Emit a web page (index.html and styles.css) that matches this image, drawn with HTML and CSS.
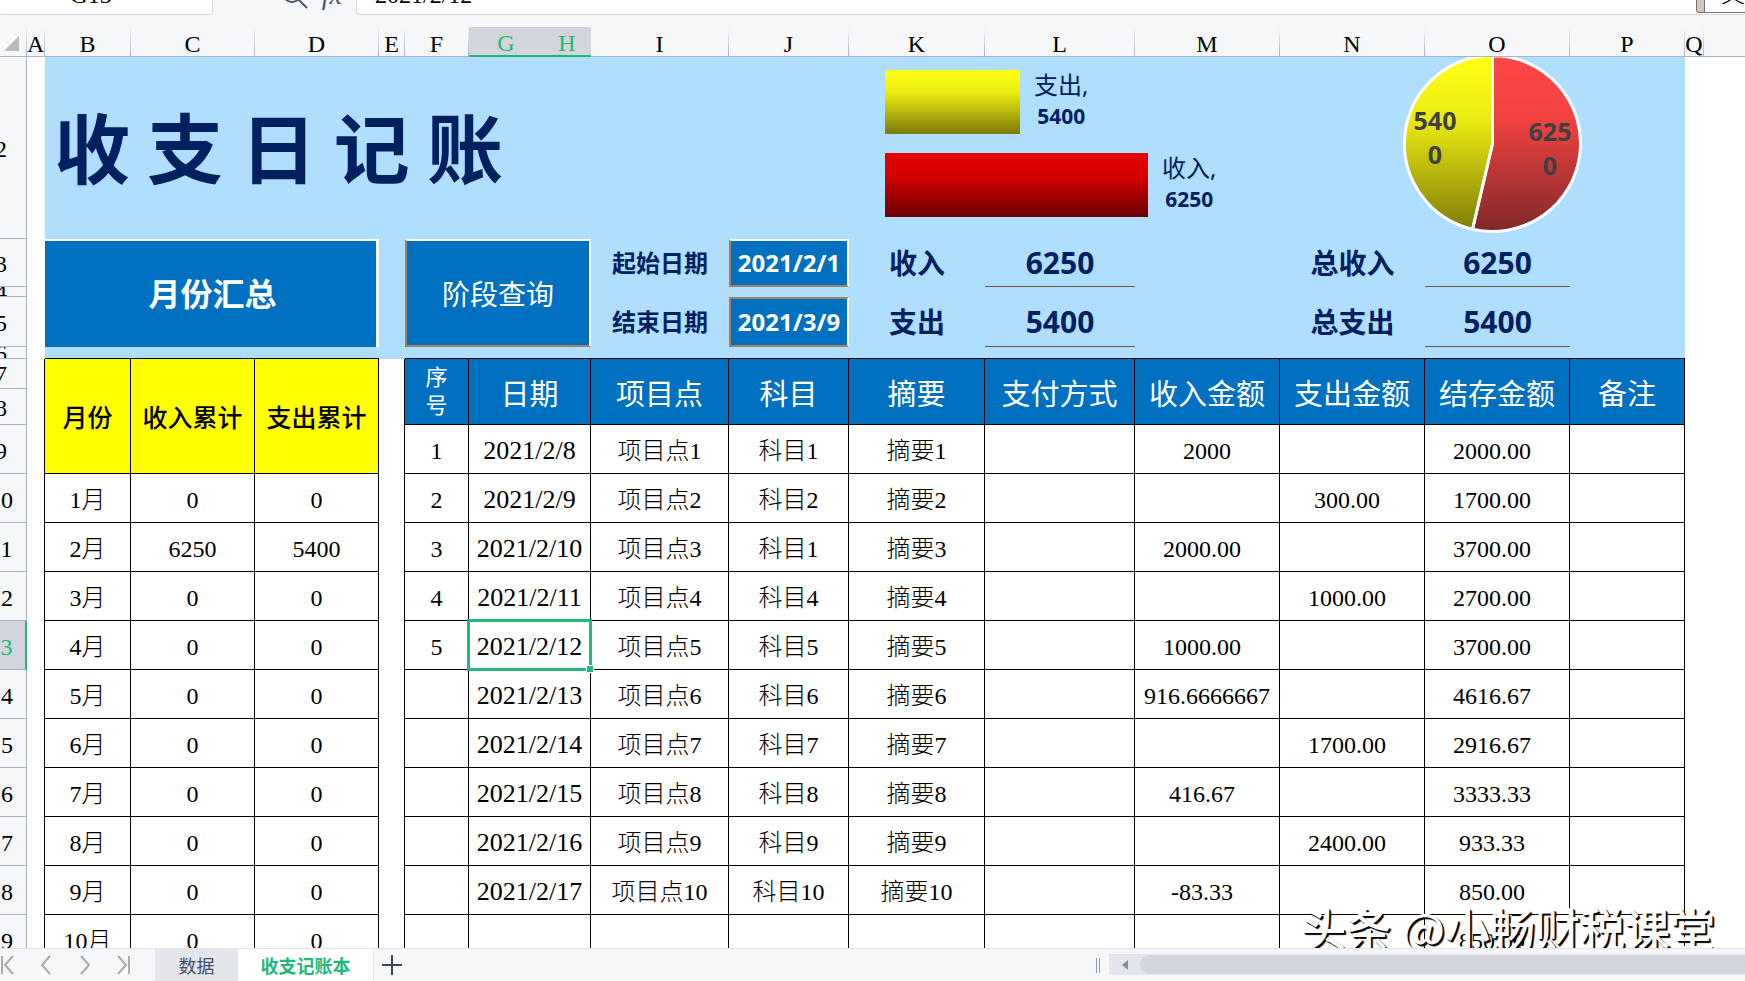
FILE: index.html
```
<!DOCTYPE html>
<html lang="zh-CN">
<head>
    <meta charset="UTF-8">
    <meta name="viewport" content="width=device-width, initial-scale=1.0">
    <title>收支日记账</title>
    <link rel="stylesheet" href="styles.css">
</head>
<body>
    <div class="formula-bar">
        <input class="name-box" type="text" value="G13" aria-label="名称框">
        <div class="formula-icons">
            <svg width="26" height="26" viewBox="0 0 26 26" fill="none" stroke="#4a5568" stroke-width="2">
                <circle cx="10" cy="10" r="9"/>
                <path d="M16 16 L25 25"/>
            </svg>
            <span class="fx">fx</span>
        </div>
        <input class="formula-input" type="text" value="2021/2/12" aria-label="编辑栏">
    </div>
    <div class="float-bar"><span class="grip"></span><span class="lang">文</span></div>

    <main class="sheet">
        <table class="grid">
            <colgroup>
                <col class="w-head"><col class="w-a"><col class="w-b"><col class="w-c"><col class="w-c"><col class="w-e">
                <col class="w-f"><col class="w-g"><col class="w-h"><col class="w-i"><col class="w-j"><col class="w-k">
                <col class="w-l"><col class="w-m"><col class="w-m"><col class="w-m"><col class="w-p"><col class="w-q"><col>
            </colgroup>
            <thead>
                <tr class="letters">
                    <th class="corner"><svg width="16" height="16" viewBox="0 0 16 16"><path d="M15 0 V15 H0 Z" fill="#b9babc"/></svg></th>
                    <th>A</th><th>B</th><th>C</th><th>D</th><th>E</th><th>F</th>
                    <th class="picked">G</th><th class="picked">H</th>
                    <th>I</th><th>J</th><th>K</th><th>L</th><th>M</th><th>N</th><th>O</th><th>P</th><th>Q</th><th class="rest"></th>
                </tr>
            </thead>
            <tbody id="rows">
                <tr class="r2">
                    <th>2</th>
                    <td></td>
                    <td class="sky title" colspan="9"><h1>收 支 日 记 账</h1></td>
                    <td class="sky top" colspan="3">
                        <div class="bars">
                            <div class="bar-row"><div class="bar out"></div><p>支出,<br><b>5400</b></p></div>
                            <div class="bar-row"><div class="bar in"></div><p>收入,<br><b>6250</b></p></div>
                        </div>
                    </td>
                    <td class="sky top" colspan="3">
                        <svg class="pie" width="182" height="178" viewBox="0 0 182 178">
                            <defs>
                                <linearGradient id="redFill" gradientUnits="userSpaceOnUse" x1="0" y1="0" x2="0" y2="176">
                                    <stop offset="0" stop-color="#ff4646"/>
                                    <stop offset="0.35" stop-color="#f24242"/>
                                    <stop offset="1" stop-color="#7f2828"/>
                                </linearGradient>
                                <linearGradient id="yellowFill" gradientUnits="userSpaceOnUse" x1="0" y1="0" x2="0" y2="176">
                                    <stop offset="0" stop-color="#ffff14"/>
                                    <stop offset="0.35" stop-color="#ecec12"/>
                                    <stop offset="1" stop-color="#7c7a06"/>
                                </linearGradient>
                            </defs>
                            <g stroke="#fff" stroke-width="3" stroke-linejoin="round">
                                <path d="M91.5 86.5 V-1.5 A88 88 0 1 1 71.5 172.2 Z" fill="url(#redFill)"/>
                                <path d="M91.5 86.5 L71.5 172.2 A88 88 0 0 1 91.5 -1.5 Z" fill="url(#yellowFill)"/>
                            </g>
                            <g class="pie-text">
                                <text x="34" y="73">540</text>
                                <text x="34" y="107">0</text>
                                <text x="149" y="84">625</text>
                                <text x="149" y="118">0</text>
                            </g>
                        </svg>
                    </td>
                    <td colspan="2"></td>
                </tr>
                <tr class="r3">
                    <th>3</th>
                    <td></td>
                    <td class="panel month" colspan="3" rowspan="3">月份汇总</td>
                    <td class="sky"></td>
                    <td class="panel query" colspan="3" rowspan="3">阶段查询</td>
                    <td class="sky label small">起始日期</td>
                    <td class="panel date">2021/2/1</td>
                    <td class="sky label">收入</td>
                    <td class="sky label line">6250</td>
                    <td class="sky"></td>
                    <td class="sky label">总收入</td>
                    <td class="sky label line">6250</td>
                    <td class="sky"></td>
                    <td colspan="2"></td>
                </tr>
                <tr class="r4">
                    <th><span>4</span></th>
                    <td></td>
                    <td class="sky"></td>
                    <td class="sky" colspan="8"></td>
                    <td colspan="2"></td>
                </tr>
                <tr class="r5">
                    <th>5</th>
                    <td></td>
                    <td class="sky"></td>
                    <td class="sky label small">结束日期</td>
                    <td class="panel date end">2021/3/9</td>
                    <td class="sky label">支出</td>
                    <td class="sky label line">5400</td>
                    <td class="sky"></td>
                    <td class="sky label">总支出</td>
                    <td class="sky label line">5400</td>
                    <td class="sky"></td>
                    <td colspan="2"></td>
                </tr>
                <tr class="r6">
                    <th><span>6</span></th>
                    <td></td>
                    <td class="sky under" colspan="3"></td>
                    <td class="sky"></td>
                    <td class="sky under" colspan="11"></td>
                    <td colspan="2"></td>
                </tr>
                <tr class="r7">
                    <th>7</th>
                    <td class="edge" rowspan="3"></td>
                    <td class="box total" rowspan="3">月份</td>
                    <td class="box total" rowspan="3">收入累计</td>
                    <td class="box total" rowspan="3">支出累计</td>
                    <td class="edge" rowspan="2"></td>
                    <td class="box head no" rowspan="2">序<br>号</td>
                    <td class="box head" rowspan="2" colspan="2">日期</td>
                    <td class="box head" rowspan="2">项目点</td>
                    <td class="box head" rowspan="2">科目</td>
                    <td class="box head" rowspan="2">摘要</td>
                    <td class="box head" rowspan="2">支付方式</td>
                    <td class="box head" rowspan="2">收入金额</td>
                    <td class="box head" rowspan="2">支出金额</td>
                    <td class="box head" rowspan="2">结存金额</td>
                    <td class="box head" rowspan="2">备注</td>
                    <td colspan="2" rowspan="2"></td>
                </tr>
                <tr class="r8"><th>8</th></tr>
            </tbody>
        </table>
        <div class="watermark">头条 @小畅财税课堂</div>
    </main>

    <footer class="tab-bar">
        <div class="tab-nav">
            <button aria-label="第一张"><svg width="14" height="20" viewBox="0 0 14 20"><path d="M2 1 V19 M13 1 L5 10 L13 19"/></svg></button>
            <button aria-label="上一张"><svg width="14" height="20" viewBox="0 0 14 20"><path d="M11 1 L3 10 L11 19"/></svg></button>
            <button aria-label="下一张"><svg width="14" height="20" viewBox="0 0 14 20"><path d="M3 1 L11 10 L3 19"/></svg></button>
            <button aria-label="最后一张"><svg width="14" height="20" viewBox="0 0 14 20"><path d="M12 1 V19 M1 1 L9 10 L1 19"/></svg></button>
        </div>
        <button class="tab">数据</button>
        <button class="tab active">收支记账本</button>
        <button class="add" aria-label="新建工作表"><svg width="20" height="20" viewBox="0 0 20 20"><path d="M10 0 V20 M0 10 H20"/></svg></button>
        <div class="splitter"></div>
        <div class="scrollbar">
            <button aria-label="向左滚动"><svg width="6" height="10" viewBox="0 0 6 10"><path d="M6 0 V10 L0 5 Z" fill="#7f8fa9"/></svg></button>
            <div class="thumb"></div>
        </div>
    </footer>

    <script>
        // [序号, 日期, 项目点, 科目, 摘要, 收入, 支出, 结存]
        const entries = [
            ['1', '2021/2/8', '项目点1', '科目1', '摘要1', '2000', '', '2000.00'],
            ['2', '2021/2/9', '项目点2', '科目2', '摘要2', '', '300.00', '1700.00'],
            ['3', '2021/2/10', '项目点3', '科目1', '摘要3', '2000.00', '', '3700.00'],
            ['4', '2021/2/11', '项目点4', '科目4', '摘要4', '', '1000.00', '2700.00'],
            ['5', '2021/2/12', '项目点5', '科目5', '摘要5', '1000.00', '', '3700.00'],
            ['', '2021/2/13', '项目点6', '科目6', '摘要6', '916.6666667', '', '4616.67'],
            ['', '2021/2/14', '项目点7', '科目7', '摘要7', '', '1700.00', '2916.67'],
            ['', '2021/2/15', '项目点8', '科目8', '摘要8', '416.67', '', '3333.33'],
            ['', '2021/2/16', '项目点9', '科目9', '摘要9', '', '2400.00', '933.33'],
            ['', '2021/2/17', '项目点10', '科目10', '摘要10', '-83.33', '', '850.00'],
            ['', '', '', '', '', '', '', '850.00'],
        ];
        const tbody = document.getElementById('rows');

        function amount(value) {
            const cls = /\.\d\d$/.test(value) ? 'box money' : 'box';
            return `<td class="${cls}">${value}</td>`;
        }

        entries.forEach((e, i) => {
            const rowNo = i + 9;
            const picked = rowNo === 13;
            const row = tbody.insertRow();
            row.className = 'data';
            // 第 9 行左侧被表头合并单元格占用
            const month = i === 0 ? '' : `
                <td class="edge"></td>
                <td class="box">${i}月</td>
                <td class="box">${i === 2 ? 6250 : 0}</td>
                <td class="box">${i === 2 ? 5400 : 0}</td>`;
            row.innerHTML = `
                <th class="${picked ? 'picked' : ''}">${rowNo}</th>
                ${month}
                <td class="edge"></td>
                <td class="box">${e[0]}</td>
                <td class="box day ${picked ? 'selected' : ''}" colspan="2">${e[1]}</td>
                <td class="box">${e[2]}</td>
                <td class="box">${e[3]}</td>
                <td class="box">${e[4]}</td>
                <td class="box"></td>
                ${amount(e[5])}
                ${amount(e[6])}
                ${amount(e[7])}
                <td class="box"></td>
                <td colspan="2"></td>
            `;
        });
    </script>
</body>
</html>
```

FILE: styles.css
```
* {
    box-sizing: border-box;
}
body {
    margin: 0;
    height: 100vh;
    display: flex;
    flex-direction: column;
    overflow: hidden;
    background-color: #f6f7f9;
    font-family: "Liberation Serif", "Noto Sans CJK SC", serif;
    font-size: 24px;
    color: #000;
}
button {
    border: none;
    background: none;
    padding: 0;
    cursor: pointer;
}

/* formula bar, scrolled partly out of the window */
.formula-bar {
    flex: none;
    display: flex;
    height: 40px;
    margin-top: -25px;
    margin-bottom: 12px;
}
.formula-bar input {
    border: 1px solid #d5d6dd;
    border-radius: 3px;
    background-color: #fff;
    font: inherit;
    padding: 0 18px;
}
.formula-bar .name-box {
    width: 214px;
    margin-left: -1px;
    padding: 0 30px 0 0;
    text-align: center;
}
.formula-icons {
    width: 143px;
    display: flex;
    justify-content: flex-end;
    align-items: flex-end;
    gap: 14px;
    padding: 0 14px 6px 0;
}
.fx {
    font-size: 28px;
    font-style: italic;
    color: #4a5568;
    line-height: 28px;
}
.formula-bar .formula-input {
    flex: 1;
    border-right: none;
}
.float-bar {
    position: absolute;
    top: -20px;
    right: 0;
    width: 49px;
    height: 33px;
    display: flex;
    border: 1px solid #77716d;
    border-right: none;
    border-radius: 0 0 0 3px;
    background-color: #fff;
    overflow: hidden;
}
.grip {
    width: 17px;
    border-right: 1px solid #77716d;
    background-color: #cdc6c2;
}
.lang {
    padding-left: 16px;
    line-height: 26px;
    font-weight: 300;
}

/* sheet */
.sheet {
    flex: 1;
    min-height: 0;
    position: relative;
    overflow: hidden;
    background-color: #fff;
}
.grid {
    width: calc(100% + 22px);
    margin-left: -22px;
    table-layout: fixed;
    border-collapse: separate;
    border-spacing: 0;
}
.w-head { width: 49px; }
.w-a { width: 18px; }
.w-b { width: 86px; }
.w-c { width: 124px; }
.w-e { width: 26px; }
.w-f { width: 64px; }
.w-g { width: 74px; }
.w-h { width: 48px; }
.w-i { width: 138px; }
.w-j { width: 120px; }
.w-k { width: 136px; }
.w-l { width: 150px; }
.w-m { width: 145px; }
.w-p { width: 115px; }
.w-q { width: 19px; }

th, td {
    padding: 0;
    text-align: center;
    vertical-align: middle;
    font-weight: 300;
    line-height: 28px;
    white-space: nowrap;
}
th {
    background-color: #f6f7f9;
    border-right: 1px solid #a9b1c9;
    border-bottom: 1px solid #a9b1c9;
}
.letters th {
    height: 30px;
    padding-top: 4px;
    line-height: 24px;
    border-right: 1px solid;
    border-image: linear-gradient(#f6f7f9, #a9b1c9) 1;
    border-bottom: 1px solid #a9b1c9;
}
.letters .rest {
    border-right: none;
}
.letters .corner {
    text-align: right;
    padding-right: 6px;
}
.corner svg {
    display: block;
    margin-left: auto;
}
.letters .picked {
    background-color: #d2d5dc;
    border-image: none;
    border-right: none;
    border-bottom: 2px solid #21ba7a;
}
.picked {
    color: #21ba7a;
}
tbody th {
    padding-top: 2px;
    padding-right: 2px;
}
tbody .picked {
    background-color: #d2d5dc;
    border-right: 2px solid #21ba7a;
}
.r2 > * { height: 182px; }
.r3 > * { height: 48px; }
.r4 > * { height: 10px; }
.r5 > * { height: 50px; }
.r6 > * { height: 12px; }
.r7 > * { height: 30px; }
.r8 > * { height: 36px; }
.r4 th, .r6 th, .r7 th {
    padding-top: 0;
}
.data > * {
    height: 49px;
    padding-top: 4px;
}
/* short rows crop their number */
.r4 span, .r6 span {
    display: flex;
    align-items: center;
    justify-content: center;
    height: 9px;
    overflow: hidden;
}
.r6 span {
    height: 11px;
}

.sky {
    background-color: #b0deff;
}
.under {
    border-bottom: 1px solid #000;
}
.top {
    vertical-align: top;
}
.title {
    padding-bottom: 6px;
}
h1 {
    margin: 0 0 0 9px;
    text-align: left;
    font-family: "Noto Sans CJK SC", sans-serif;
    font-size: 76px;
    line-height: 90px;
    font-weight: 700;
    color: #002060;
}

/* charts */
.bars {
    display: flex;
    flex-direction: column;
    gap: 19px;
    padding: 13px 0 0 36px;
}
.bar-row {
    display: flex;
    align-items: center;
    gap: 14px;
    height: 64px;
    color: #002060;
}
.bar-row p {
    margin: 0;
    padding-bottom: 4px;
    font-family: "Noto Sans", "Noto Sans CJK SC", sans-serif;
    font-size: 24px;
    font-weight: 400;
    line-height: 30px;
}
.bar-row b {
    font-size: 21px;
}
.bar {
    height: 64px;
}
.bar.out {
    width: 135px;
    background: linear-gradient(#ffff14, #ecec12 35%, #7c7a06);
}
.bar.in {
    width: 263px;
    background: linear-gradient(#e60000, #d60000 35%, #6c0000);
}
.pie {
    display: block;
    margin-left: 121px;
}
.pie-text {
    font-family: "Noto Sans", sans-serif;
    font-size: 25px;
    font-weight: 700;
    fill: #404040;
    text-anchor: middle;
}

/* summary */
.panel {
    background-color: #0070c0;
    color: #fff;
    font-family: "Noto Sans CJK SC", sans-serif;
}
.month {
    padding: 0 0 4px 4px;
    font-size: 32px;
    font-weight: 700;
    border-top: 2px solid #fff;
    border-right: 3px solid #fff;
}
.query {
    font-size: 28px;
    font-weight: 400;
    border: 2px solid #a08060;
    border-top-color: #fff;
    border-right-color: #fff;
}
.date {
    font-family: "Noto Sans", sans-serif;
    font-weight: 700;
    border: 2px solid #a08060;
    border-top-color: #fff;
    border-right-color: #fff;
}
.date.end {
    border-top-color: #a08060;
}
.label {
    font-family: "Noto Sans", "Noto Sans CJK SC", sans-serif;
    font-size: 28px;
    font-weight: 700;
    color: #002060;
}
.label.small {
    font-size: 24px;
}
.line {
    font-size: 30px;
    border-bottom: 1px solid #6a5a50;
}

/* ledger */
.edge {
    border-right: 1px solid #000;
}
.box {
    border-right: 1px solid #000;
    border-bottom: 1px solid #000;
}
.total {
    padding-top: 6px;
    background-color: #ff0;
    font-size: 25px;
    font-weight: 500;
}
.head {
    padding-top: 6px;
    background-color: #0070c0;
    color: #fff;
    font-size: 29px;
    font-weight: 400;
}
.no {
    padding-top: 0;
    font-size: 22px;
}
.day {
    font-size: 26px;
}
.money {
    padding-right: 10px;
}
.selected {
    position: relative;
}
.selected::before {
    content: "";
    position: absolute;
    inset: -2px;
    border: 3px solid #21ba7a;
}
.selected::after {
    content: "";
    position: absolute;
    right: -3px;
    bottom: -3px;
    width: 6px;
    height: 6px;
    background-color: #21ba7a;
    outline: 1px solid #fff;
}
.watermark {
    position: absolute;
    right: 30px;
    bottom: -8px;
    font-family: "Noto Sans CJK SC", sans-serif;
    font-size: 45px;
    font-weight: 500;
    line-height: 56px;
    color: #fff;
    text-shadow: 2px 2px 1px #000, 1px 1px 0 #000;
}

/* sheet tabs */
.tab-bar {
    flex: none;
    display: flex;
    height: 33px;
    border-top: 1px solid #e2e4ea;
    font-family: "Noto Sans CJK SC", sans-serif;
}
.tab-nav {
    width: 155px;
    display: flex;
    gap: 25px;
    align-items: center;
}
.tab-nav svg {
    display: block;
    fill: none;
    stroke: #a9abb0;
    stroke-width: 2;
}
.tab {
    width: 83px;
    background-color: #e5e6ec;
    font-family: inherit;
    font-size: 18px;
    color: #46506a;
}
.tab.active {
    width: 136px;
    background-color: #fff;
    border-right: 1px solid #e2e4ea;
    font-weight: 700;
    color: #21ba7a;
}
.add {
    width: 36px;
    display: flex;
    align-items: center;
    justify-content: center;
}
.add svg {
    stroke: #36425a;
    stroke-width: 2;
}
.splitter {
    width: 4px;
    height: 15px;
    margin: 9px 9px 0 auto;
    border-left: 1px solid #8c99b3;
    border-right: 1px solid #8c99b3;
}
.scrollbar {
    flex: 0 0 636px;
    height: 21px;
    margin-top: 5px;
    display: flex;
    background-color: #e5e6ec;
}
.scrollbar button {
    width: 31px;
    display: flex;
    align-items: center;
    justify-content: center;
}
.thumb {
    flex: 1;
    margin: 1px 0;
    border-radius: 9px 0 0 9px;
    background-color: #d3d6df;
}
```
